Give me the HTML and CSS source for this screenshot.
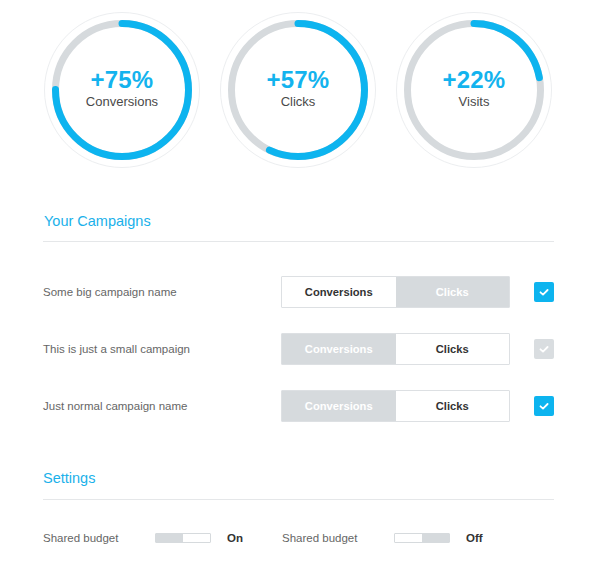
FILE: index.html
```html
<!DOCTYPE html>
<html lang="en">
<head>
<meta charset="utf-8">
<title>Campaigns</title>
<link rel="stylesheet" href="styles.css">
</head>
<body>
<div class="page">
  <div class="stats">
    <div class="stat">
      <svg class="ring" viewBox="0 0 156 156" width="156" height="156">
        <circle class="ring-outer" cx="78" cy="78" r="77.5"/>
        <circle class="ring-track" cx="78" cy="78" r="66.5"/>
        <circle class="ring-bar" cx="78" cy="78" r="66.5" style="stroke-dasharray: 313.4 417.8" transform="rotate(-90 78 78)"/>
      </svg>
      <div class="stat-text">
        <div class="stat-value">+75%</div>
        <div class="stat-label">Conversions</div>
      </div>
    </div>
    <div class="stat">
      <svg class="ring" viewBox="0 0 156 156" width="156" height="156">
        <circle class="ring-outer" cx="78" cy="78" r="77.5"/>
        <circle class="ring-track" cx="78" cy="78" r="66.5"/>
        <circle class="ring-bar" cx="78" cy="78" r="66.5" style="stroke-dasharray: 238.1 417.8" transform="rotate(-90 78 78)"/>
      </svg>
      <div class="stat-text">
        <div class="stat-value">+57%</div>
        <div class="stat-label">Clicks</div>
      </div>
    </div>
    <div class="stat">
      <svg class="ring" viewBox="0 0 156 156" width="156" height="156">
        <circle class="ring-outer" cx="78" cy="78" r="77.5"/>
        <circle class="ring-track" cx="78" cy="78" r="66.5"/>
        <circle class="ring-bar" cx="78" cy="78" r="66.5" style="stroke-dasharray: 91.9 417.8" transform="rotate(-90 78 78)"/>
      </svg>
      <div class="stat-text">
        <div class="stat-value">+22%</div>
        <div class="stat-label">Visits</div>
      </div>
    </div>
  </div>

  <h2 class="section-title campaigns-title">Your Campaigns</h2>

  <div class="campaigns">
    <div class="campaign">
      <div class="campaign-name">Some big campaign name</div>
      <div class="segmented">
        <div class="seg seg-on">Conversions</div>
        <div class="seg seg-off">Clicks</div>
      </div>
      <div class="check check-on">
        <svg viewBox="0 0 20 20" width="20" height="20"><polyline points="6.5,10.3 9,12.6 13.6,8" /></svg>
      </div>
    </div>
    <div class="campaign">
      <div class="campaign-name">This is just a small campaign</div>
      <div class="segmented">
        <div class="seg seg-off">Conversions</div>
        <div class="seg seg-on">Clicks</div>
      </div>
      <div class="check check-off">
        <svg viewBox="0 0 20 20" width="20" height="20"><polyline points="6.5,10.3 9,12.6 13.6,8" /></svg>
      </div>
    </div>
    <div class="campaign">
      <div class="campaign-name">Just normal campaign name</div>
      <div class="segmented">
        <div class="seg seg-off">Conversions</div>
        <div class="seg seg-on">Clicks</div>
      </div>
      <div class="check check-on">
        <svg viewBox="0 0 20 20" width="20" height="20"><polyline points="6.5,10.3 9,12.6 13.6,8" /></svg>
      </div>
    </div>
  </div>

  <h2 class="section-title settings-title">Settings</h2>

  <div class="settings">
    <div class="setting">
      <div class="setting-name">Shared budget</div>
      <div class="toggle toggle-on"><span class="toggle-fill"></span></div>
      <div class="setting-state">On</div>
    </div>
    <div class="setting">
      <div class="setting-name">Shared budget</div>
      <div class="toggle toggle-off"><span class="toggle-fill"></span></div>
      <div class="setting-state">Off</div>
    </div>
  </div>
</div>
</body>
</html>
```

FILE: styles.css
```css
* { box-sizing: border-box; }

html, body {
  margin: 0;
  padding: 0;
  background: #ffffff;
}

body {
  font-family: "Liberation Sans", Arial, Helvetica, sans-serif;
  color: #333;
}

.page {
  width: 605px;
  padding: 12px 51px 0 43px;
}

/* Stats */
.stats {
  display: flex;
  gap: 20px;
  padding-left: 1px;
}

.stat {
  display: grid;
  width: 156px;
  height: 156px;
}

.stat > * {
  grid-area: 1 / 1;
}

.ring { display: block; }

.ring-outer {
  fill: none;
  stroke: #eceef0;
  stroke-width: 1;
}

.ring-track {
  fill: none;
  stroke: #d6dadd;
  stroke-width: 7;
}

.ring-bar {
  fill: none;
  stroke: #0db4ef;
  stroke-width: 7;
  stroke-linecap: round;
}

.stat-text {
  align-self: center;
  justify-self: center;
  text-align: center;
  padding-bottom: 2px;
}

.stat-value {
  font-size: 24px;
  font-weight: bold;
  line-height: 26px;
  color: #13b3ee;
  letter-spacing: 0.2px;
}

.stat-label {
  font-size: 13px;
  line-height: 18px;
  color: #4a4a4a;
}

/* Section titles */
.section-title {
  margin: 0;
  font-size: 14.5px;
  font-weight: normal;
  line-height: 20px;
  color: #1ab1ea;
  border-bottom: 1px solid #e5e7e9;
  padding-bottom: 10px;
  padding-left: 1px;
}

.campaigns-title { margin-top: 43px; }

.settings-title {
  margin-top: 46px;
  padding-bottom: 11px;
  padding-left: 0;
}

/* Campaign rows */
.campaigns {
  margin-top: 34px;
  display: flex;
  flex-direction: column;
  gap: 25px;
}

.campaign {
  display: flex;
  align-items: center;
  height: 32px;
}

.campaign-name {
  flex: 1;
  font-size: 11.5px;
  color: #666;
}

.segmented {
  display: flex;
  width: 229px;
  height: 32px;
  border: 1px solid #dde0e3;
  border-radius: 1px;
  overflow: hidden;
}

.seg {
  flex: 1;
  display: flex;
  align-items: center;
  justify-content: center;
  font-size: 11.2px;
  font-weight: bold;
}

.seg-on {
  background: #ffffff;
  color: #333;
}

.seg-off {
  background: #d6dadd;
  color: #ffffff;
}

.check {
  width: 20px;
  height: 20px;
  margin-left: 24px;
  border-radius: 2px;
}

.check svg { display: block; }

.check polyline {
  fill: none;
  stroke: #ffffff;
  stroke-width: 1.8;
  stroke-linecap: round;
  stroke-linejoin: round;
}

.check-on { background: #0db4ef; }
.check-off { background: #d9dde0; }

/* Settings */
.settings {
  margin-top: 28px;
  display: flex;
  gap: 0;
}

.setting {
  display: flex;
  align-items: center;
  height: 20px;
  width: 239px;
}

.setting-name {
  width: 112px;
  font-size: 11.5px;
  color: #666;
}

.toggle {
  display: flex;
  width: 56px;
  height: 10px;
  border: 1px solid #d6dadd;
  border-radius: 1px;
}

.toggle-fill {
  width: 27px;
  background: #d6dadd;
}

.toggle-off { justify-content: flex-end; }

.setting-state {
  margin-left: 16px;
  font-size: 11.5px;
  font-weight: bold;
  color: #333;
}
```
